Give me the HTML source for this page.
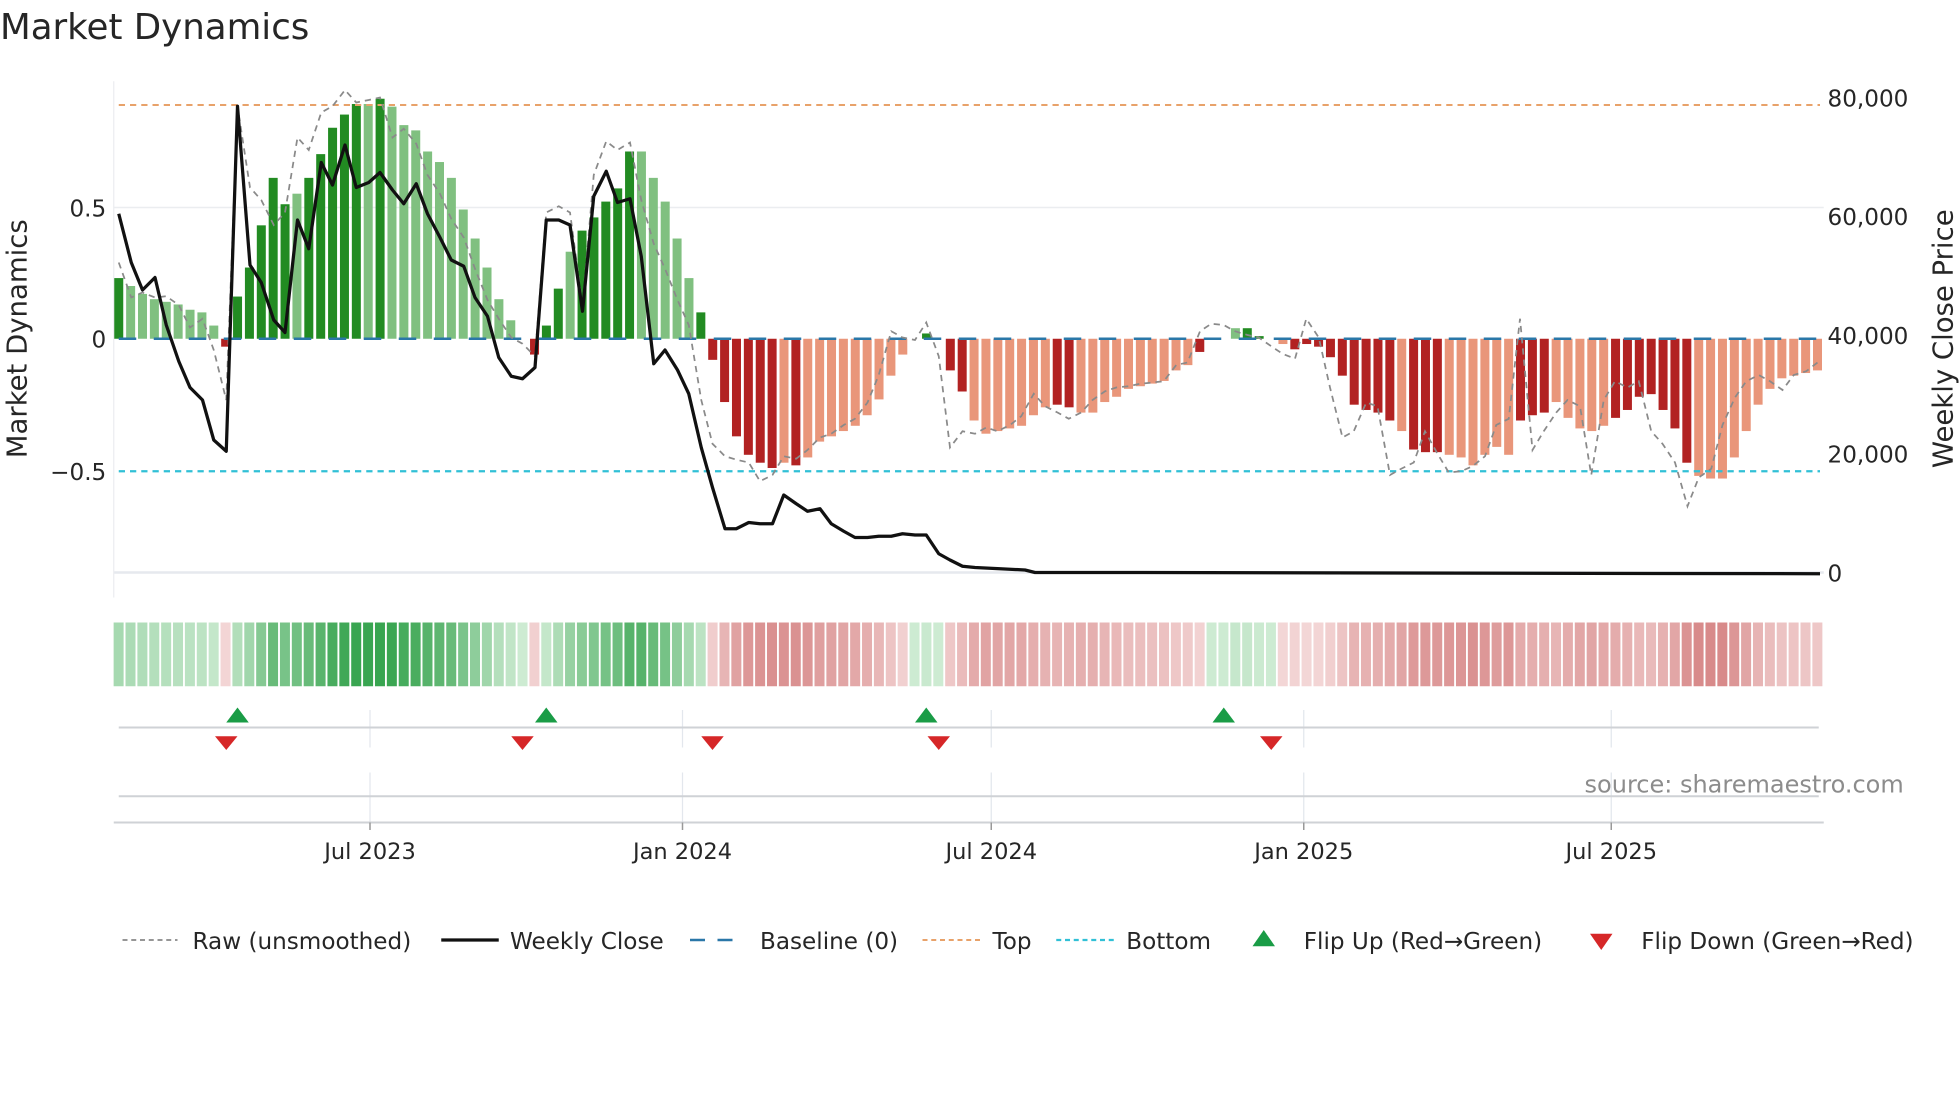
<!DOCTYPE html>
<html><head><meta charset="utf-8"><style>
html,body{margin:0;padding:0;background:#fff;width:1960px;height:1102px;overflow:hidden}
svg{display:block}
text{font-family:"DejaVu Sans","Liberation Sans",sans-serif;fill:#262626}
</style></head><body>
<svg id="s" width="1960" height="1102" viewBox="0 0 1568 881.6" xmlns="http://www.w3.org/2000/svg">
<text x="0" y="31" font-size="28.5">Market Dynamics</text>
<g id="grid">
<line x1="91" y1="166" x2="1459" y2="166" stroke="#ebedf0" stroke-width="1.2"/>
<line x1="91" y1="458" x2="1459" y2="458" stroke="#e6e9ee" stroke-width="2"/>
<line x1="91" y1="65" x2="91" y2="478" stroke="#ebedf0" stroke-width="1"/>
</g>
<g id="bars"></g>
<line x1="95" y1="271" x2="1456" y2="271" stroke="#2a77a8" stroke-width="2" stroke-dasharray="14,14" id="base"/>
<line x1="95" y1="84" x2="1456" y2="84" stroke="#e8a26a" stroke-width="1.6" stroke-dasharray="5,4"/>
<line x1="95" y1="377" x2="1456" y2="377" stroke="#31c0d6" stroke-width="1.8" stroke-dasharray="5,4"/>
<polyline id="raw" fill="none" stroke="#8a8a8a" stroke-width="1.4" stroke-dasharray="5,4"/>
<polyline id="px" fill="none" stroke="#111" stroke-width="2.6" stroke-linejoin="round"/>
<g font-size="18.5">
<text x="85" y="173" text-anchor="end">0.5</text>
<text x="85" y="278" text-anchor="end">0</text>
<text x="85" y="384" text-anchor="end">−0.5</text>
<text x="1462" y="85">80,000</text>
<text x="1462" y="180">60,000</text>
<text x="1462" y="275">40,000</text>
<text x="1462" y="370">20,000</text>
<text x="1462" y="465">0</text>
</g>
<text font-size="22" transform="translate(21,271) rotate(-90)" text-anchor="middle">Market Dynamics</text>
<text font-size="22" transform="translate(1562,271) rotate(-90)" text-anchor="middle">Weekly Close Price</text>
<g id="strip"></g>
<g stroke="#e3e7ed" stroke-width="1">
<line x1="296" y1="568" x2="296" y2="598"/><line x1="546" y1="568" x2="546" y2="598"/><line x1="793" y1="568" x2="793" y2="598"/><line x1="1043" y1="568" x2="1043" y2="598"/><line x1="1289" y1="568" x2="1289" y2="598"/>
<line x1="296" y1="618" x2="296" y2="658"/><line x1="546" y1="618" x2="546" y2="658"/><line x1="793" y1="618" x2="793" y2="658"/><line x1="1043" y1="618" x2="1043" y2="658"/><line x1="1289" y1="618" x2="1289" y2="658"/>
</g>
<line x1="95" y1="582" x2="1455" y2="582" stroke="#cfd2d6" stroke-width="1.6"/>
<line x1="95" y1="637" x2="1455" y2="637" stroke="#cfd2d6" stroke-width="1.6"/>
<line x1="91" y1="658" x2="1459" y2="658" stroke="#cfd2d6" stroke-width="1.6"/>
<g stroke="#999" stroke-width="1.2">
<line x1="296" y1="658" x2="296" y2="664"/><line x1="546" y1="658" x2="546" y2="664"/><line x1="793" y1="658" x2="793" y2="664"/><line x1="1043" y1="658" x2="1043" y2="664"/><line x1="1289" y1="658" x2="1289" y2="664"/>
</g>
<g id="mk"></g>
<text x="1523" y="634" font-size="19.2" text-anchor="end" style="fill:#8c8c8c">source: sharemaestro.com</text>
<g font-size="18">
<text x="296" y="687" text-anchor="middle">Jul 2023</text>
<text x="546" y="687" text-anchor="middle">Jan 2024</text>
<text x="793" y="687" text-anchor="middle">Jul 2024</text>
<text x="1043" y="687" text-anchor="middle">Jan 2025</text>
<text x="1289" y="687" text-anchor="middle">Jul 2025</text>
</g>
<g font-size="18.5">
<line x1="98" y1="752" x2="142" y2="752" stroke="#888" stroke-width="1.4" stroke-dasharray="4,3"/>
<text x="154" y="759">Raw (unsmoothed)</text>
<line x1="353" y1="752" x2="399" y2="752" stroke="#111" stroke-width="2.6"/>
<text x="408" y="759">Weekly Close</text>
<line x1="552" y1="752" x2="596" y2="752" stroke="#2a77a8" stroke-width="2" stroke-dasharray="12,10"/>
<text x="608" y="759">Baseline (0)</text>
<line x1="738" y1="752" x2="784" y2="752" stroke="#e8a26a" stroke-width="1.6" stroke-dasharray="4,3"/>
<text x="794" y="759">Top</text>
<line x1="845" y1="752" x2="891" y2="752" stroke="#31c0d6" stroke-width="1.8" stroke-dasharray="4,3"/>
<text x="901" y="759">Bottom</text>
<polygon points="1002,757 1020,757 1011,744" fill="#1a9c46"/>
<text x="1043" y="759">Flip Up (Red→Green)</text>
<polygon points="1272,747 1290,747 1281,760" fill="#d62728"/>
<text x="1313" y="759">Flip Down (Green→Red)</text>
</g>
</svg>
<script>
var V=[.23,.20,.17,.15,.14,.13,.11,.10,.05,-.03,.16,.27,.43,.61,.51,.55,.61,.70,.80,.85,.89,.89,.91,.88,.81,.79,.71,.67,.61,.49,.38,.27,.15,.07,0,-.06,.05,.19,.33,.41,.46,.52,.57,.71,.71,.61,.52,.38,.23,.10,-.08,-.24,-.37,-.44,-.47,-.49,-.47,-.48,-.45,-.39,-.37,-.35,-.33,-.29,-.23,-.14,-.06,0,.02,0,-.12,-.20,-.31,-.36,-.35,-.34,-.33,-.29,-.26,-.25,-.26,-.28,-.28,-.24,-.22,-.19,-.18,-.17,-.16,-.12,-.10,-.05,0,0,.04,.04,.01,0,-.02,-.04,-.02,-.03,-.07,-.14,-.25,-.27,-.28,-.31,-.35,-.42,-.43,-.43,-.44,-.45,-.48,-.44,-.41,-.44,-.31,-.29,-.28,-.24,-.30,-.34,-.35,-.33,-.30,-.27,-.22,-.21,-.27,-.34,-.47,-.52,-.53,-.53,-.45,-.35,-.25,-.19,-.15,-.14,-.13,-.12];
var D="dllllllllddddddldddddldlllllllllllddddldddddllllldddddddldllllllllllddddlllllllddllllllllllddlldddldddddddddldddlllllldddllllldddddddllllllll";
var ns="http://www.w3.org/2000/svg",b=document.getElementById('bars'),st=document.getElementById('strip');
var N=V.length,sp=(1454-95)/(N-1);
function el(t,a,p){var e=document.createElementNS(ns,t);for(var k in a)e.setAttribute(k,a[k]);p.appendChild(e);return e}
for(var i=0;i<N;i++){var v=V[i],x=95+sp*i;if(v!=0){var h=Math.abs(v)*211;var dk=D[i]=='d';var c=v>0?(dk?'#228b22':'#80c080'):(dk?'#b22222':'#e9967a');el('rect',{x:x-3.6,y:v>0?271-h:271,width:7.2,height:h,fill:c},b);}
var r,g,bb;if(v>=0){var t=Math.min(v/0.9,1);r=205+(56-205)*t;g=235+(165-235)*t;bb=210+(80-210)*t;}else{var t=Math.min(-v/0.55,1);r=245+(215-245)*t;g=218+(135-218)*t;bb=218+(135-218)*t;}
el('rect',{x:x-4.1,y:498,width:8,height:51,fill:'rgb('+(r|0)+','+(g|0)+','+(bb|0)+')'},st);}
var P="95,171 105,210 114,232 124,222 133,260 143,289 152,310 162,320 171,352 181,361 190,85 200,212 209,226 219,256 228,266 238,176 247,199 257,130 266,148 276,116 285,150 295,146 304,138 314,152 323,163 333,147 342,171 352,190 361,208 371,213 380,238 390,253 399,286 409,301 418,303 428,294 437,176 447,176 456,180 466,249 475,157 485,137 494,162 504,159 513,205 523,291 532,280 542,296 551,315 561,358 570,390 580,423 589,423 599,418 608,419 618,419 627,396 637,403 646,409 656,407 665,419 675,425 684,430 694,430 703,429 713,429 722,427 732,428 741,428 751,443 760,448 770,453 780,454 800,455 820,456 828,458 900,458 1456,459";
document.getElementById('px').setAttribute('points',P);
var R="95,210 105,238 114,234 124,238 133,237 143,244 152,262 162,255 171,280 181,320 190,85 200,150 209,160 219,180 228,170 238,110 247,120 257,90 266,85 276,72 285,82 295,80 304,78 314,110 323,103 333,115 342,140 352,155 361,175 371,190 380,215 390,240 399,255 409,270 418,275 428,285 437,170 447,165 456,170 466,245 475,140 485,113 494,120 504,114 513,160 523,195 532,215 542,240 551,260 561,320 570,355 580,365 590,368 599,370 608,385 618,380 627,365 637,367 646,360 656,350 665,347 675,340 684,335 694,322 703,300 713,265 722,270 732,272 741,258 751,285 760,358 770,345 780,347 789,342 798,345 808,340 817,333 827,315 836,325 846,330 855,335 865,330 874,320 884,313 893,310 903,309 912,307 922,306 931,305 941,292 950,290 960,265 969,259 979,260 988,265 998,268 1007,270 1017,277 1026,283 1036,287 1045,255 1055,270 1064,310 1074,350 1083,345 1093,322 1102,325 1112,380 1121,375 1131,370 1140,345 1150,363 1159,378 1169,377 1178,373 1188,365 1197,340 1207,335 1216,255 1226,360 1235,345 1245,330 1254,320 1264,325 1273,380 1283,320 1292,305 1302,310 1311,305 1321,345 1330,355 1340,370 1350,405 1359,382 1369,375 1378,340 1388,318 1397,305 1407,300 1416,305 1426,312 1435,300 1445,297 1454,290";
document.getElementById('raw').setAttribute('points',R);
var mk=document.getElementById('mk');
[190,437,741,979].forEach(function(x){el('polygon',{points:(x-9)+',578 '+(x+9)+',578 '+x+',566',fill:'#1a9c46'},mk)});
[181,418,570,751,1017].forEach(function(x){el('polygon',{points:(x-9)+',589 '+(x+9)+',589 '+x+',600',fill:'#d62728'},mk)});
</script>
</body></html>
